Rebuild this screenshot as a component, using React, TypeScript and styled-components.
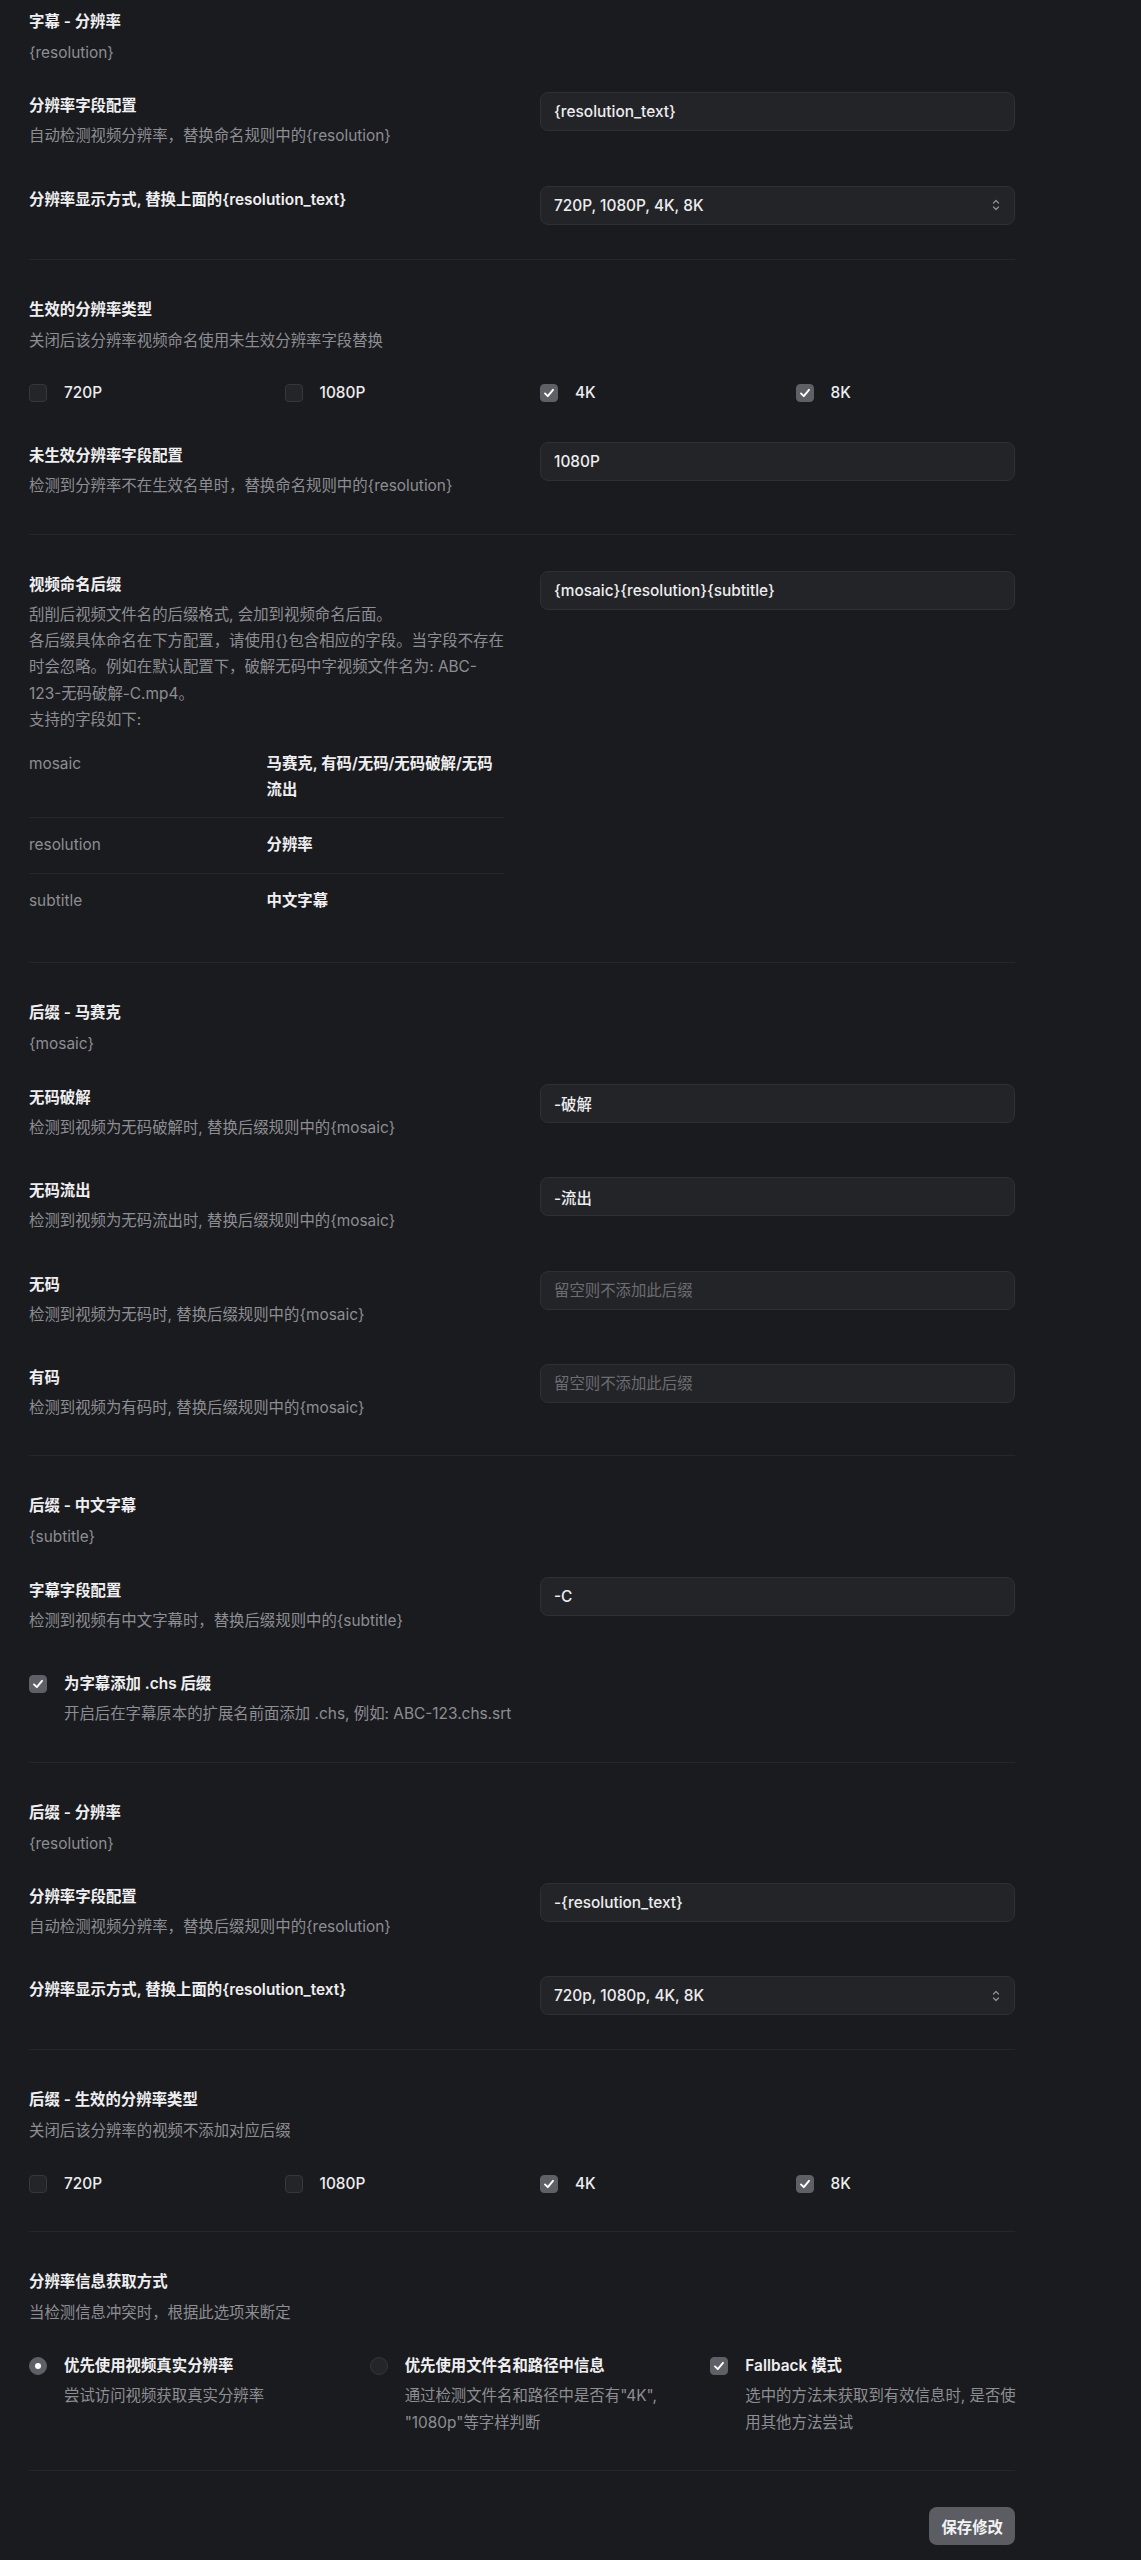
import React from 'react';
import styled, { createGlobalStyle } from 'styled-components';

const GlobalStyle = createGlobalStyle`
  html, body {
    margin: 0;
    padding: 0;
    background: #1a1b1e;
  }
  body {
    font-family: Inter, "Noto Sans CJK SC", sans-serif;
    color: #ededef;
    -webkit-font-smoothing: antialiased;
  }
  * { box-sizing: border-box; }
`;

const Page = styled.div`
  width: 986px;
  margin-left: 29px;
  padding-bottom: 15px;
`;

const Section = styled.section<{ $first?: boolean }>`
  padding: ${(p) => (p.$first ? '0' : '18px')} 0 16px;
  border-bottom: 1px solid #26272b;
`;

const SectionHeader = styled.div<{ $first?: boolean }>`
  padding: ${(p) => (p.$first ? '8px' : '18px')} 0 8px;
`;

const SectionTitle = styled.div`
  font-size: 15.4px;
  font-weight: 600;
  line-height: 28px;
  color: #efeff1;
`;

const SectionDesc = styled.div`
  margin-top: 4px;
  font-size: 15.4px;
  line-height: 26.4px;
  color: #8d8e93;
`;

const Row = styled.div`
  display: grid;
  grid-template-columns: 1fr 1fr;
  column-gap: 36px;
  align-items: start;
  padding: 18px 0;
`;

const Label = styled.div`
  min-width: 0;
`;

const LabelTitle = styled.div`
  font-size: 15.4px;
  font-weight: 600;
  line-height: 28px;
  color: #efeff1;
`;

const LabelDesc = styled.div<{ $nowrap?: boolean }>`
  margin-top: 3px;
  font-size: 15.4px;
  line-height: 26.4px;
  color: #8d8e93;
  white-space: ${(p) => (p.$nowrap ? 'nowrap' : 'normal')};
`;

const TextInput = styled.input`
  display: block;
  width: 100%;
  height: 39px;
  padding: 0 13px;
  border-radius: 8px;
  border: 1px solid #2f3034;
  background: #232427;
  color: #ededef;
  font-family: inherit;
  font-size: 15.4px;
  font-weight: 500;
  outline: none;
  &::placeholder {
    color: #6c6d72;
    font-weight: 400;
  }
`;

const SelectBox = styled.div`
  display: flex;
  align-items: center;
  justify-content: space-between;
  height: 39px;
  padding: 0 14px 0 13px;
  border-radius: 8px;
  border: 1px solid #2f3034;
  background: #232427;
  color: #ededef;
  font-size: 15.4px;
  font-weight: 500;
`;

const CheckGrid = styled.div<{ $cols: number }>`
  display: grid;
  grid-template-columns: repeat(${(p) => p.$cols}, 1fr);
  column-gap: 36px;
  padding: 18px 0;
`;

const CheckItem = styled.label`
  display: flex;
  align-items: center;
  gap: 17px;
  font-size: 15.4px;
  font-weight: 500;
  line-height: 26px;
  color: #ededef;
`;

const Box = styled.span<{ $checked?: boolean; $round?: boolean }>`
  flex: none;
  display: flex;
  align-items: center;
  justify-content: center;
  width: 18px;
  height: 18px;
  border-radius: ${(p) => (p.$round ? '50%' : '4px')};
  background: ${(p) => (p.$checked ? '#5f6067' : '#242528')};
  border: 1px solid ${(p) => (p.$checked ? '#5f6067' : '#36373b')};
`;

const Dot = styled.span`
  width: 6px;
  height: 6px;
  border-radius: 50%;
  background: #ffffff;
`;

const OptionItem = styled.div`
  display: flex;
  align-items: flex-start;
  gap: 17px;
  min-width: 0;
`;

const OptionControl = styled.div`
  padding-top: 5px;
`;

const OptionBody = styled.div`
  min-width: 0;
`;

const OptionRow = styled.div<{ $cols: number }>`
  display: grid;
  grid-template-columns: repeat(${(p) => p.$cols}, 1fr);
  column-gap: 36px;
  padding: 18px 0;
`;

const FieldTable = styled.div`
  margin-top: 3px;
`;

const FieldRow = styled.div`
  display: grid;
  grid-template-columns: 1fr 1fr;
  padding: 14px 0;
  font-size: 15.4px;
  line-height: 26.4px;
  border-bottom: 1px solid #25262a;
  &:last-child {
    border-bottom: none;
  }
`;

const FieldKey = styled.div`
  color: #8d8e93;
`;

const FieldValue = styled.div`
  color: #efeff1;
  font-weight: 600;
`;

const Footer = styled.div`
  display: flex;
  justify-content: flex-end;
  padding-top: 36px;
`;

const SaveButton = styled.button`
  height: 38px;
  padding: 0 12px;
  border: none;
  border-radius: 8px;
  background: #5c5d63;
  color: #f2f2f4;
  font-family: inherit;
  font-size: 15.4px;
  font-weight: 600;
`;

const CheckIcon = () => (
  <svg width="14" height="14" viewBox="0 0 14 14" fill="none">
    <path d="M3 7.4L5.8 10.2L11 3.8" stroke="#ffffff" strokeWidth="1.9" strokeLinecap="round" strokeLinejoin="round" />
  </svg>
);

const Chevrons = () => (
  <svg width="8" height="14" viewBox="0 0 8 14" fill="none" stroke="#8d8e93" strokeWidth="1.3" strokeLinecap="round" strokeLinejoin="round">
    <path d="M1.5 5L4 2.5L6.5 5" />
    <path d="M1.5 9L4 11.5L6.5 9" />
  </svg>
);

const Checkbox = ({ checked }: { checked?: boolean }) => (
  <Box $checked={checked}>{checked && <CheckIcon />}</Box>
);

const Radio = ({ checked }: { checked?: boolean }) => (
  <Box $round $checked={checked}>{checked && <Dot />}</Box>
);

const Header = ({ title, desc, first }: { title: string; desc: string; first?: boolean }) => (
  <SectionHeader $first={first}>
    <SectionTitle>{title}</SectionTitle>
    <SectionDesc>{desc}</SectionDesc>
  </SectionHeader>
);

const InputRow = ({ title, desc, value, placeholder }: { title: string; desc?: string; value?: string; placeholder?: string }) => (
  <Row>
    <Label>
      <LabelTitle>{title}</LabelTitle>
      {desc && <LabelDesc>{desc}</LabelDesc>}
    </Label>
    <TextInput readOnly value={value ?? ''} placeholder={placeholder} />
  </Row>
);

const SelectRow = ({ title, value }: { title: string; value: string }) => (
  <Row>
    <Label>
      <LabelTitle>{title}</LabelTitle>
    </Label>
    <SelectBox>
      <span>{value}</span>
      <Chevrons />
    </SelectBox>
  </Row>
);

const resolutions = [
  { label: '720P', checked: false },
  { label: '1080P', checked: false },
  { label: '4K', checked: true },
  { label: '8K', checked: true },
];

const ResolutionChecks = () => (
  <CheckGrid $cols={4}>
    {resolutions.map((r) => (
      <CheckItem key={r.label}>
        <Checkbox checked={r.checked} />
        {r.label}
      </CheckItem>
    ))}
  </CheckGrid>
);

const fields = [
  { key: 'mosaic', value: '马赛克, 有码/无码/无码破解/无码流出' },
  { key: 'resolution', value: '分辨率' },
  { key: 'subtitle', value: '中文字幕' },
];

export default function App() {
  return (
    <>
      <GlobalStyle />
      <Page>
        <Section $first>
          <Header first title="字幕 - 分辨率" desc="{resolution}" />
          <InputRow title="分辨率字段配置" desc="自动检测视频分辨率，替换命名规则中的{resolution}" value="{resolution_text}" />
          <SelectRow title="分辨率显示方式, 替换上面的{resolution_text}" value="720P, 1080P, 4K, 8K" />
        </Section>

        <Section>
          <Header title="生效的分辨率类型" desc="关闭后该分辨率视频命名使用未生效分辨率字段替换" />
          <ResolutionChecks />
          <InputRow title="未生效分辨率字段配置" desc="检测到分辨率不在生效名单时，替换命名规则中的{resolution}" value="1080P" />
        </Section>

        <Section>
          <Row>
            <Label>
              <LabelTitle>视频命名后缀</LabelTitle>
              <LabelDesc $nowrap>
                刮削后视频文件名的后缀格式, 会加到视频命名后面。
                <br />
                各后缀具体命名在下方配置，请使用{'{}'}包含相应的字段。当字段不存在
                <br />
                时会忽略。例如在默认配置下，破解无码中字视频文件名为: ABC-
                <br />
                123-无码破解-C.mp4。
                <br />
                支持的字段如下:
              </LabelDesc>
              <FieldTable>
                {fields.map((f) => (
                  <FieldRow key={f.key}>
                    <FieldKey>{f.key}</FieldKey>
                    <FieldValue>{f.value}</FieldValue>
                  </FieldRow>
                ))}
              </FieldTable>
            </Label>
            <TextInput readOnly value="{mosaic}{resolution}{subtitle}" />
          </Row>
        </Section>

        <Section>
          <Header title="后缀 - 马赛克" desc="{mosaic}" />
          <InputRow title="无码破解" desc="检测到视频为无码破解时, 替换后缀规则中的{mosaic}" value="-破解" />
          <InputRow title="无码流出" desc="检测到视频为无码流出时, 替换后缀规则中的{mosaic}" value="-流出" />
          <InputRow title="无码" desc="检测到视频为无码时, 替换后缀规则中的{mosaic}" placeholder="留空则不添加此后缀" />
          <InputRow title="有码" desc="检测到视频为有码时, 替换后缀规则中的{mosaic}" placeholder="留空则不添加此后缀" />
        </Section>

        <Section>
          <Header title="后缀 - 中文字幕" desc="{subtitle}" />
          <InputRow title="字幕字段配置" desc="检测到视频有中文字幕时，替换后缀规则中的{subtitle}" value="-C" />
          <OptionRow $cols={1}>
            <OptionItem>
              <OptionControl>
                <Checkbox checked />
              </OptionControl>
              <OptionBody>
                <LabelTitle>为字幕添加 .chs 后缀</LabelTitle>
                <LabelDesc>开启后在字幕原本的扩展名前面添加 .chs, 例如: ABC-123.chs.srt</LabelDesc>
              </OptionBody>
            </OptionItem>
          </OptionRow>
        </Section>

        <Section>
          <Header title="后缀 - 分辨率" desc="{resolution}" />
          <InputRow title="分辨率字段配置" desc="自动检测视频分辨率，替换后缀规则中的{resolution}" value="-{resolution_text}" />
          <SelectRow title="分辨率显示方式, 替换上面的{resolution_text}" value="720p, 1080p, 4K, 8K" />
        </Section>

        <Section>
          <Header title="后缀 - 生效的分辨率类型" desc="关闭后该分辨率的视频不添加对应后缀" />
          <ResolutionChecks />
        </Section>

        <Section>
          <Header title="分辨率信息获取方式" desc="当检测信息冲突时，根据此选项来断定" />
          <OptionRow $cols={3}>
            <OptionItem>
              <OptionControl>
                <Radio checked />
              </OptionControl>
              <OptionBody>
                <LabelTitle>优先使用视频真实分辨率</LabelTitle>
                <LabelDesc>尝试访问视频获取真实分辨率</LabelDesc>
              </OptionBody>
            </OptionItem>
            <OptionItem>
              <OptionControl>
                <Radio />
              </OptionControl>
              <OptionBody>
                <LabelTitle>优先使用文件名和路径中信息</LabelTitle>
                <LabelDesc $nowrap>
                  通过检测文件名和路径中是否有"4K",
                  <br />
                  "1080p"等字样判断
                </LabelDesc>
              </OptionBody>
            </OptionItem>
            <OptionItem>
              <OptionControl>
                <Checkbox checked />
              </OptionControl>
              <OptionBody>
                <LabelTitle>Fallback 模式</LabelTitle>
                <LabelDesc $nowrap>
                  选中的方法未获取到有效信息时, 是否使
                  <br />
                  用其他方法尝试
                </LabelDesc>
              </OptionBody>
            </OptionItem>
          </OptionRow>
        </Section>

        <Footer>
          <SaveButton>保存修改</SaveButton>
        </Footer>
      </Page>
    </>
  );
}
